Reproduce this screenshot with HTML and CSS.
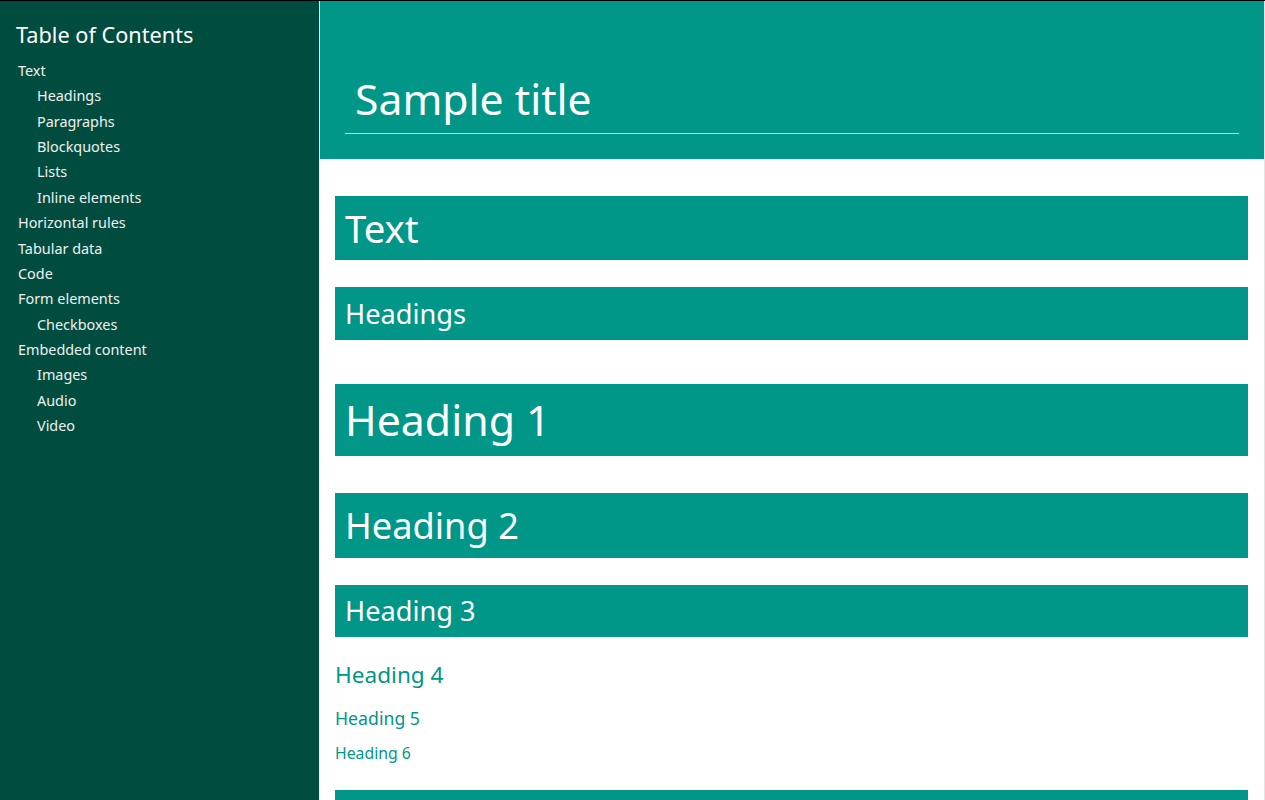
FILE: index.html
```html
<!DOCTYPE html>
<html lang="en">
<head>
<meta charset="utf-8">
<title>Sample title</title>
<link rel="stylesheet" href="styles.css">
</head>
<body>
<div class="page">
  <nav class="toc">
    <h2 class="toc-title">Table of Contents</h2>
    <ul class="toc-list">
      <li><a href="#text">Text</a>
        <ul class="toc-sub">
          <li><a href="#headings">Headings</a></li>
          <li><a href="#paragraphs">Paragraphs</a></li>
          <li><a href="#blockquotes">Blockquotes</a></li>
          <li><a href="#lists">Lists</a></li>
          <li><a href="#inline">Inline elements</a></li>
        </ul>
      </li>
      <li><a href="#hr">Horizontal rules</a></li>
      <li><a href="#tables">Tabular data</a></li>
      <li><a href="#code">Code</a></li>
      <li><a href="#forms">Form elements</a>
        <ul class="toc-sub">
          <li><a href="#checkboxes">Checkboxes</a></li>
        </ul>
      </li>
      <li><a href="#embedded">Embedded content</a>
        <ul class="toc-sub">
          <li><a href="#images">Images</a></li>
          <li><a href="#audio">Audio</a></li>
          <li><a href="#video">Video</a></li>
        </ul>
      </li>
    </ul>
  </nav>
  <div class="content">
    <header class="site-header">
      <h1 class="site-title">Sample title</h1>
    </header>
    <main class="main">
      <section id="text">
        <h2 class="box box-section">Text</h2>
        <section id="headings">
          <h3 class="box box-sub">Headings</h3>
          <h1 class="box box-h1">Heading 1</h1>
          <h2 class="box box-h2">Heading 2</h2>
          <h3 class="box box-h3">Heading 3</h3>
          <h4 class="plain-h4">Heading 4</h4>
          <h5 class="plain-h5">Heading 5</h5>
          <h6 class="plain-h6">Heading 6</h6>
        </section>
        <section id="paragraphs">
          <h3 class="box box-sub box-next">Paragraphs</h3>
          <p class="para">A paragraph (from the Greek paragraphos, “to write beside” or “written beside”) is a self-contained unit of a discourse in writing dealing with a particular point or idea.</p>
        </section>
      </section>
    </main>
  </div>
</div>
</body>
</html>
```

FILE: styles.css
```css
html, body {
  margin: 0;
  padding: 0;
  height: 100%;
}

body {
  font-family: "Noto Sans", "Open Sans", "DejaVu Sans", sans-serif;
  background: #ffffff;
  overflow: hidden;
}

.page {
  display: grid;
  grid-template-columns: 320px 1fr;
  height: 100vh;
  box-sizing: border-box;
  border-top: 1px solid #000000;
}

/* Sidebar */
.toc {
  background: #004d40;
  border-right: 1px solid #e0f2f1;
  padding: 19px 0 0 16px;
  color: #eeeeee;
}

.toc-title {
  margin: 0;
  font-size: 21.7px;
  font-weight: 400;
  line-height: 30px;
  color: #ffffff;
}

.toc-list,
.toc-sub {
  list-style: none;
  margin: 0;
  padding: 0;
}

.toc-list {
  margin-top: 8px;
  padding-left: 2px;
}

.toc-sub {
  padding-left: 19px;
}

.toc a {
  display: block;
  color: #f0f0f0;
  text-decoration: none;
  font-size: 14.4px;
  line-height: 25.36px;
}

/* Content column */
.content {
  border-right: 1px solid #e4e4e4;
  display: flex;
  flex-direction: column;
  min-width: 0;
}

.site-header {
  background: #009688;
  padding: 71px 25px 25px 25px;
}

.site-title {
  margin: 0;
  padding: 0 10px 7px;
  font-size: 42.7px;
  font-weight: 400;
  line-height: 54px;
  color: #ffffff;
  border-bottom: 1px solid #b2dfdb;
}

.main {
  padding: 37px 16px 0 15px;
}

.box {
  margin: 0;
  background: #009688;
  color: #ffffff;
  font-weight: 400;
  padding-left: 10px;
  padding-right: 10px;
}

.box-section {
  font-size: 38.4px;
  line-height: 48px;
  padding-top: 8px;
  padding-bottom: 8px;
}

.box-sub {
  margin-top: 27px;
  font-size: 27.2px;
  line-height: 33px;
  padding-top: 10px;
  padding-bottom: 10px;
}

.box-h1 {
  margin-top: 44px;
  font-size: 42.8px;
  line-height: 54px;
  padding-top: 9px;
  padding-bottom: 9px;
}

.box-h2 {
  margin-top: 37px;
  font-size: 36.2px;
  line-height: 49px;
  padding-top: 8px;
  padding-bottom: 8px;
}

.box-h3 {
  margin-top: 27px;
  font-size: 27.2px;
  line-height: 34px;
  padding-top: 9px;
  padding-bottom: 9px;
}

.plain-h4,
.plain-h5,
.plain-h6 {
  margin: 0;
  font-weight: 400;
  color: #009688;
}

.plain-h4 {
  margin-top: 23px;
  font-size: 22.6px;
  line-height: 29px;
}

.plain-h5 {
  margin-top: 18px;
  font-size: 17.7px;
  line-height: 23px;
}

.plain-h6 {
  margin-top: 14px;
  font-size: 15.8px;
  line-height: 19px;
}

.box-next {
  margin-top: 27px;
}

.para {
  margin: 20px 0 0;
  font-size: 16px;
  line-height: 1.6;
  color: #333333;
}
```
